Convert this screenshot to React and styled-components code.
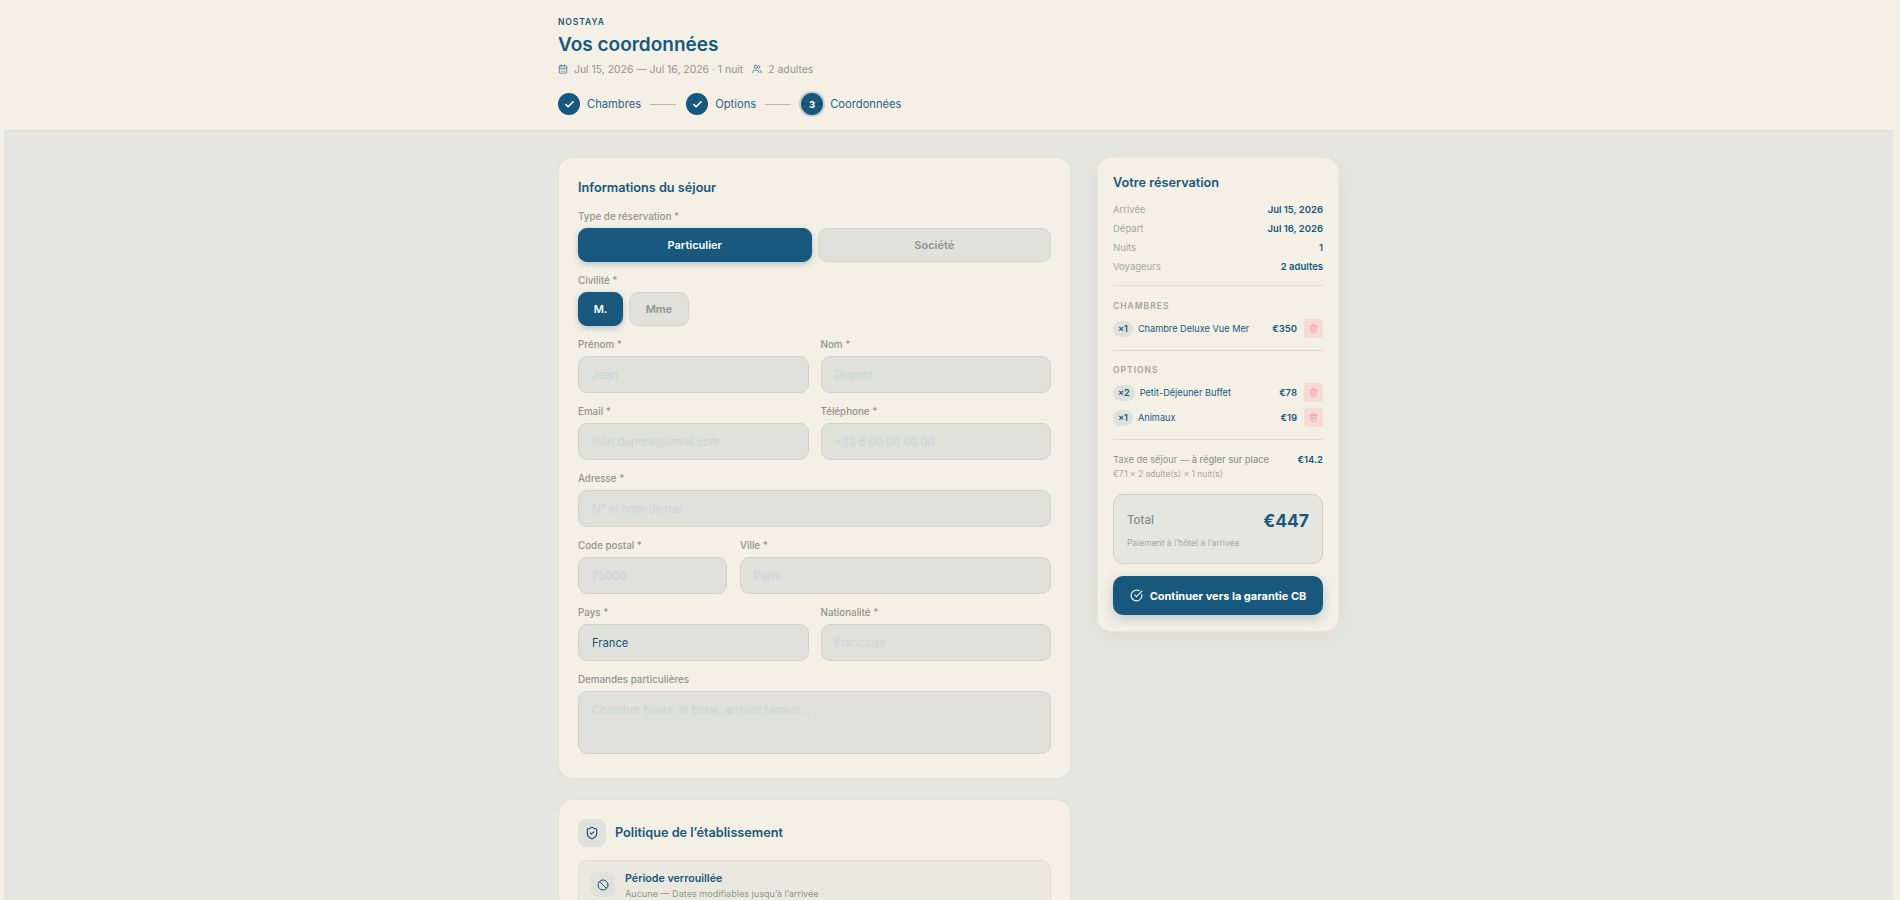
import React from 'react';
import styled, { createGlobalStyle } from 'styled-components';
import { Ban, CalendarDays, Check, CircleCheckBig, ShieldCheck, Trash2, Users } from 'lucide-react';

const navy = '#17587c';
const cream = '#f5f0e6';
const muted = '#8f958a';

const GlobalStyle = createGlobalStyle`
  * { box-sizing: border-box; }
  html, body { margin: 0; padding: 0; height: 100%; overflow: hidden; }
  body { background: ${cream}; color: ${navy}; font-family: Inter, "Liberation Sans", sans-serif; }
  #root { height: 100%; }
`;

const Page = styled.div`
  height: 100vh;
  overflow: hidden;
  display: flex;
  flex-direction: column;
`;

const Header = styled.header`
  height: 131px;
  flex-shrink: 0;
  padding: 17px 0 0 558px;
`;

const Brand = styled.div`
  font-size: 8.5px;
  line-height: 11px;
  font-weight: 600;
  letter-spacing: 0.9px;
`;

const Title = styled.h1`
  margin: 4px 0 0;
  font-size: 19px;
  line-height: 26px;
  font-weight: 600;
`;

const Meta = styled.div`
  margin-top: 4px;
  display: flex;
  align-items: center;
  height: 14px;
  font-size: 10.4px;
  color: ${muted};
  svg { color: ${navy}; opacity: 0.8; flex-shrink: 0; }
`;

const MetaText = styled.span`
  margin: 0 9px 0 6px;
`;

const Steps = styled.div`
  margin-top: 17px;
  display: flex;
  align-items: center;
`;

const StepDot = styled.span`
  width: 22px;
  height: 22px;
  border-radius: 50%;
  background: ${navy};
  color: #fff;
  display: flex;
  align-items: center;
  justify-content: center;
  font-size: 9.5px;
  font-weight: 700;
  box-shadow: ${(p) => (p.$current ? '0 0 0 2px #c3cfd0' : 'none')};
`;

const StepLabel = styled.span`
  margin-left: 7px;
  font-size: 11.2px;
  color: #2a6486;
`;

const StepLine = styled.span`
  width: 26px;
  height: 1px;
  margin: 0 10px 0 9px;
  background: #b4b8ad;
`;

const Main = styled.main`
  flex: 1;
  margin: 0 7px 0 4px;
  padding: 26px 0 0 554px;
  background: #e5e6df;
  box-shadow: 0 -1px 0 #e3e1d6;
  display: flex;
  align-items: flex-start;
  gap: 26px;
`;

const FormColumn = styled.div`
  width: 513px;
  display: flex;
  flex-direction: column;
  gap: 20px;
`;

const Card = styled.section`
  background: ${cream};
  border: 1px solid #e0e0d4;
  border-radius: 14px;
  padding: ${(p) => p.$padding};
`;

const CardTitle = styled.h2`
  margin: 0;
  font-size: 12.7px;
  line-height: 18px;
  font-weight: 600;
`;

const Label = styled.label`
  display: block;
  margin-top: ${(p) => p.$top || 0}px;
  margin-bottom: 4px;
  font-size: 9.8px;
  line-height: 14px;
  font-weight: 500;
  color: ${muted};
`;

const Toggles = styled.div`
  display: flex;
  gap: 6px;
  margin-bottom: 12px;
`;

const Toggle = styled.button`
  flex: ${(p) => (p.$fixed ? '0 0 auto' : '1')};
  width: ${(p) => p.$fixed || 'auto'};
  height: 34px;
  border-radius: 9px;
  font: 600 11px Inter, "Liberation Sans", sans-serif;
  color: ${(p) => (p.$on ? '#fff' : '#8d9690')};
  background: ${(p) => (p.$on ? navy : '#dfe1da')};
  border: 1px solid ${(p) => (p.$on ? navy : '#d3d5cc')};
  box-shadow: ${(p) => (p.$on ? '0 2px 6px rgba(23, 88, 124, 0.3)' : 'none')};
`;

const Row = styled.div`
  display: grid;
  grid-template-columns: ${(p) => p.$cols || '1fr'};
  column-gap: ${(p) => p.$gap || 12}px;
  margin-bottom: 12px;
`;

const Input = styled.input`
  display: block;
  width: 100%;
  height: 37px;
  padding: 0 13px;
  background: #dfe1da;
  border: 1px solid #d1d3ca;
  border-radius: 9px;
  font: 400 11.2px Inter, "Liberation Sans", sans-serif;
  color: ${navy};
  &::placeholder { color: #cdd4d7; opacity: 1; }
`;

const TextArea = styled.textarea`
  display: block;
  width: 100%;
  height: 63px;
  padding: 11px 13px;
  resize: none;
  background: #dfe1da;
  border: 1px solid #d1d3ca;
  border-radius: 9px;
  font: 400 11.2px Inter, "Liberation Sans", sans-serif;
  color: ${navy};
  &::placeholder { color: #cdd4d7; opacity: 1; }
`;

const PolicyHead = styled.div`
  display: flex;
  align-items: center;
  gap: 9px;
  margin-bottom: 13px;
`;

const IconBox = styled.span`
  width: ${(p) => p.$size}px;
  height: ${(p) => p.$size}px;
  flex-shrink: 0;
  border-radius: 8px;
  background: #e0e1da;
  display: flex;
  align-items: center;
  justify-content: center;
  color: ${navy};
`;

const PolicyItem = styled.div`
  display: flex;
  align-items: flex-start;
  gap: 10px;
  padding: 11px;
  height: 90px;
  background: #ebe9df;
  border: 1px solid #dfdfd3;
  border-radius: 10px;
`;

const PolicyName = styled.div`
  font-size: 10.7px;
  line-height: 14px;
  font-weight: 600;
`;

const PolicyText = styled.div`
  margin-top: 1px;
  font-size: 9.1px;
  line-height: 13px;
  color: ${muted};
`;

const Summary = styled.aside`
  width: 242px;
  padding: 16px 15px 16px;
  background: ${cream};
  border: 1px solid #e8e7dc;
  border-radius: 14px;
  box-shadow: 0 6px 18px rgba(60, 70, 60, 0.06);
`;

const SummaryLines = styled.div`
  margin-top: 8px;
`;

const SummaryLine = styled.div`
  display: flex;
  justify-content: space-between;
  align-items: center;
  height: 19px;
  font-size: 9.5px;
  color: #a3a89d;
  strong { font-weight: 600; color: ${navy}; }
`;

const Divider = styled.hr`
  margin: ${(p) => p.$margin};
  border: 0;
  border-top: 1px solid #dedfd3;
`;

const Overline = styled.div`
  margin-bottom: 4px;
  font-size: 8.5px;
  line-height: 12px;
  font-weight: 600;
  letter-spacing: 1px;
  color: #a0a59a;
`;

const Item = styled.div`
  display: flex;
  align-items: center;
  height: 25px;
  font-size: 9.2px;
`;

const Qty = styled.span`
  height: 16px;
  padding: 0 5px;
  margin-right: 5px;
  border-radius: 8px;
  background: #dde0db;
  display: flex;
  align-items: center;
  font-weight: 600;
  font-size: 9px;
`;

const ItemName = styled.span`
  flex: 1;
`;

const ItemPrice = styled.span`
  font-weight: 600;
  font-size: 9.5px;
  margin-right: 7px;
`;

const Remove = styled.button`
  width: 19px;
  height: 19px;
  padding: 0;
  border: 0;
  border-radius: 4px;
  background: #f8d9d4;
  color: #ee9a9a;
  display: flex;
  align-items: center;
  justify-content: center;
`;

const TaxLine = styled.div`
  display: flex;
  justify-content: space-between;
  align-items: center;
  font-size: 9.3px;
  line-height: 14px;
  color: ${muted};
  strong { font-weight: 500; }
`;

const TaxPrice = styled.span`
  font-weight: 600;
  font-size: 9.5px;
  color: ${navy};
`;

const TaxNote = styled.div`
  font-size: 8.5px;
  line-height: 14px;
  color: #a3a89d;
`;

const TotalBox = styled.div`
  margin-top: 13px;
  height: 70px;
  padding: 12px 13px 0;
  background: #e5e6df;
  border: 1px solid #cfd1c7;
  border-radius: 10px;
`;

const TotalRow = styled.div`
  display: flex;
  justify-content: space-between;
  align-items: center;
  height: 26px;
  font-size: 11.5px;
  font-weight: 500;
  color: #858b80;
`;

const TotalPrice = styled.span`
  font-size: 17.5px;
  font-weight: 700;
  color: ${navy};
`;

const TotalNote = styled.div`
  margin-top: 4px;
  font-size: 8.5px;
  line-height: 12px;
  color: #a3a89d;
`;

const Submit = styled.button`
  margin-top: 12px;
  width: 100%;
  height: 39px;
  border: 0;
  border-radius: 10px;
  background: ${navy};
  color: #fff;
  display: flex;
  align-items: center;
  justify-content: center;
  gap: 7px;
  font: 700 11px Inter, "Liberation Sans", sans-serif;
  box-shadow: 0 4px 12px rgba(23, 88, 124, 0.25);
`;

function Field({ label, ...rest }) {
  return (
    <div>
      <Label>{label}</Label>
      <Input {...rest} />
    </div>
  );
}

function LineItem({ qty, name, price }) {
  return (
    <Item>
      <Qty>×{qty}</Qty>
      <ItemName>{name}</ItemName>
      <ItemPrice>{price}</ItemPrice>
      <Remove>
        <Trash2 size={9} />
      </Remove>
    </Item>
  );
}

export default function App() {
  return (
    <Page>
      <GlobalStyle />
      <Header>
        <Brand>NOSTAYA</Brand>
        <Title>Vos coordonnées</Title>
        <Meta>
          <CalendarDays size={10} />
          <MetaText>Jul 15, 2026 — Jul 16, 2026 · 1 nuit</MetaText>
          <Users size={10} />
          <MetaText>2 adultes</MetaText>
        </Meta>
        <Steps>
          <StepDot><Check size={11} strokeWidth={3.5} /></StepDot>
          <StepLabel>Chambres</StepLabel>
          <StepLine />
          <StepDot><Check size={11} strokeWidth={3.5} /></StepDot>
          <StepLabel>Options</StepLabel>
          <StepLine />
          <StepDot $current>3</StepDot>
          <StepLabel>Coordonnées</StepLabel>
        </Steps>
      </Header>

      <Main>
        <FormColumn>
          <Card $padding="21px 19px 24px">
            <CardTitle>Informations du séjour</CardTitle>
            <Label $top={13}>Type de réservation *</Label>
            <Toggles>
              <Toggle $on>Particulier</Toggle>
              <Toggle>Société</Toggle>
            </Toggles>
            <Label>Civilité *</Label>
            <Toggles>
              <Toggle $on $fixed="45px">M.</Toggle>
              <Toggle $fixed="60px">Mme</Toggle>
            </Toggles>
            <Row $cols="1fr 1fr">
              <Field label="Prénom *" placeholder="Jean" />
              <Field label="Nom *" placeholder="Dupont" />
            </Row>
            <Row $cols="1fr 1fr">
              <Field label="Email *" placeholder="jean.dupont@email.com" />
              <Field label="Téléphone *" placeholder="+33 6 00 00 00 00" />
            </Row>
            <Row>
              <Field label="Adresse *" placeholder="N° et nom de rue" />
            </Row>
            <Row $cols="149px 1fr" $gap={13}>
              <Field label="Code postal *" placeholder="75000" />
              <Field label="Ville *" placeholder="Paris" />
            </Row>
            <Row $cols="1fr 1fr">
              <Field label="Pays *" defaultValue="France" />
              <Field label="Nationalité *" placeholder="Française" />
            </Row>
            <Label>Demandes particulières</Label>
            <TextArea placeholder="Chambre haute, lit bébé, arrivée tardive..." />
          </Card>

          <Card $padding="19px 19px 24px">
            <PolicyHead>
              <IconBox $size={28}><ShieldCheck size={14} /></IconBox>
              <CardTitle>Politique de l’établissement</CardTitle>
            </PolicyHead>
            <PolicyItem>
              <IconBox $size={25}><Ban size={12} /></IconBox>
              <div>
                <PolicyName>Période verrouillée</PolicyName>
                <PolicyText>Aucune — Dates modifiables jusqu’à l’arrivée</PolicyText>
              </div>
            </PolicyItem>
          </Card>
        </FormColumn>

        <Summary>
          <CardTitle>Votre réservation</CardTitle>
          <SummaryLines>
            <SummaryLine>Arrivée<strong>Jul 15, 2026</strong></SummaryLine>
            <SummaryLine>Départ<strong>Jul 16, 2026</strong></SummaryLine>
            <SummaryLine>Nuits<strong>1</strong></SummaryLine>
            <SummaryLine>Voyageurs<strong>2 adultes</strong></SummaryLine>
          </SummaryLines>
          <Divider $margin="9px 0 14px" />
          <Overline>CHAMBRES</Overline>
          <LineItem qty={1} name="Chambre Deluxe Vue Mer" price="€350" />
          <Divider $margin="9px 0 13px" />
          <Overline>OPTIONS</Overline>
          <LineItem qty={2} name="Petit-Déjeuner Buffet" price="€78" />
          <LineItem qty={1} name="Animaux" price="€19" />
          <Divider $margin="9px 0 13px" />
          <TaxLine>
            <span>Taxe de séjour — <strong>à régler sur place</strong></span>
            <TaxPrice>€14.2</TaxPrice>
          </TaxLine>
          <TaxNote>€7.1 × 2 adulte(s) × 1 nuit(s)</TaxNote>
          <TotalBox>
            <TotalRow>Total<TotalPrice>€447</TotalPrice></TotalRow>
            <TotalNote>Paiement à l’hôtel à l’arrivée</TotalNote>
          </TotalBox>
          <Submit>
            <CircleCheckBig size={13} />
            Continuer vers la garantie CB
          </Submit>
        </Summary>
      </Main>
    </Page>
  );
}
